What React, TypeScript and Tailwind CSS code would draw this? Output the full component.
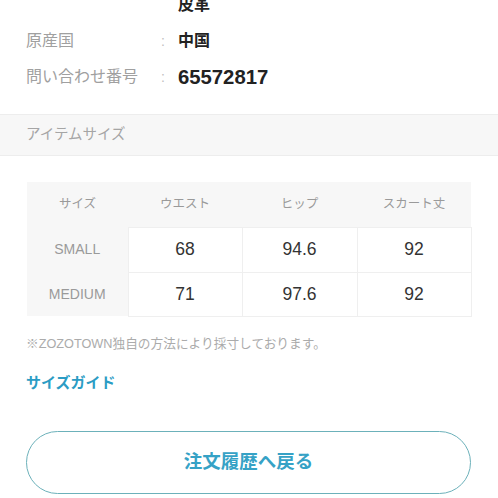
import React from "react";

const font = { fontFamily: '"Liberation Sans", "Noto Sans CJK JP", sans-serif' };

export default function App() {
  const rows = [
    { label: "原産国", value: "中国", big: false },
    { label: "問い合わせ番号", value: "65572817", big: true },
  ];
  const data = [
    ["SMALL", "68", "94.6", "92"],
    ["MEDIUM", "71", "97.6", "92"],
  ];
  return (
    <div className="w-[498px] h-[498px] overflow-hidden bg-white" style={font}>
      <div className="-mt-[13px]">
        <div className="h-9 flex items-center pl-[178px]">
          <span className="text-[16px] font-bold text-[#222]">皮革</span>
        </div>
        {rows.map((r) => (
          <div key={r.label} className="h-9 flex items-center">
            <span className="pl-[26px] w-[161px] text-[16px] text-[#a0a0a0]">{r.label}</span>
            <span className="w-[17px] text-[14px] text-[#c0c0c0]">:</span>
            <span className={r.big ? "text-[20.3px] font-bold text-[#222]" : "text-[16px] font-bold text-[#222]"}>{r.value}</span>
          </div>
        ))}
      </div>
      <div className="mt-[19px] h-[42px] bg-[#f7f7f7] border-y border-[#ededed] flex items-center pl-[26px]">
        <span className="text-[14.5px] text-[#a5a5a5]">アイテムサイズ</span>
      </div>
      <div className="pt-[26px] pl-[27px]">
        <table className="border-collapse w-[444px] table-fixed">
          <colgroup>
            <col className="w-[101px]" />
            <col className="w-[114px]" />
            <col className="w-[115px]" />
            <col className="w-[114px]" />
          </colgroup>
          <thead>
            <tr className="h-[45px] bg-[#f7f7f7]">
              {["サイズ", "ウエスト", "ヒップ", "スカート丈"].map((h) => (
                <th key={h} className="font-normal text-[12.5px] text-[#9a9a9a] text-center">{h}</th>
              ))}
            </tr>
          </thead>
          <tbody>
            {data.map((row, i) => (
              <tr key={row[0]} className={i === 0 ? "h-[45px]" : "h-[44px]"}>
                <td className="bg-[#f7f7f7] text-center text-[14px] text-[#9a9a9a]">{row[0]}</td>
                {row.slice(1).map((v, j) => (
                  <td key={j} className="text-center text-[17.5px] text-[#333] border border-[#efefef] border-r-0 last:border-r">{v}</td>
                ))}
              </tr>
            ))}
          </tbody>
        </table>
      </div>
      <div className="mt-[19px] pl-[26px] h-[18px] flex items-center">
        <span className="text-[12.7px] text-[#ababab]">※ZOZOTOWN独自の方法により採寸しております。</span>
      </div>
      <div className="mt-[20px] pl-[26px] h-[20px] flex items-center">
        <span className="text-[15px] font-bold text-[#2b9cc4]">サイズガイド</span>
      </div>
      <div className="mt-[37px] pl-[26px]">
        <button className="w-[445px] h-[63px] rounded-full border-[1.5px] border-[#6cb1ba] flex items-center justify-center bg-white">
          <span className="text-[18.5px] font-bold text-[#36a2c6]">注文履歴へ戻る</span>
        </button>
      </div>
    </div>
  );
}
